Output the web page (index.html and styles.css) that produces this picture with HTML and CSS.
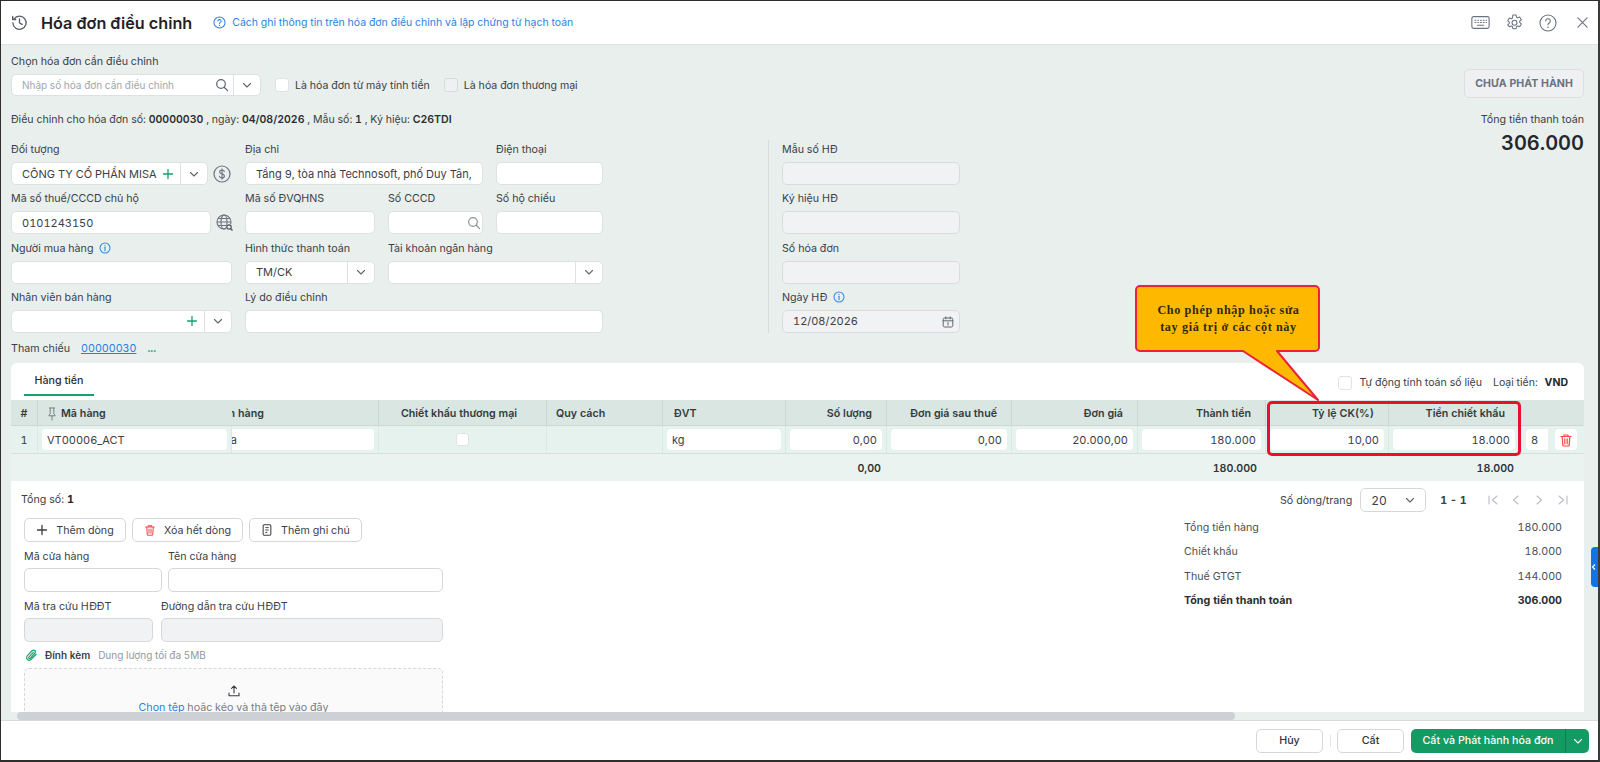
FILE: index.html
```html
<!DOCTYPE html>
<html lang="vi">
<head>
<meta charset="utf-8">
<title>Hóa đơn điều chỉnh</title>
<link rel="stylesheet" href="styles.css">
</head>
<body>
<svg class="sprite" width="0" height="0">
  <symbol id="chev" viewBox="0 0 12 12"><path d="M2.5 4.5 6 8l3.5-3.5" fill="none" stroke="currentColor" stroke-width="1.1" stroke-linecap="round" stroke-linejoin="round"/></symbol>
  <symbol id="plus" viewBox="0 0 12 12"><path d="M6 1.5v9M1.5 6h9" fill="none" stroke="currentColor" stroke-width="1.3" stroke-linecap="round"/></symbol>
  <symbol id="info" viewBox="0 0 14 14"><circle cx="7" cy="7" r="5.8" fill="none" stroke="currentColor" stroke-width="1.2"/><circle cx="7" cy="4.2" r=".8" fill="currentColor"/><path d="M7 6.2v4" stroke="currentColor" stroke-width="1.3" stroke-linecap="round"/></symbol>
  <symbol id="search" viewBox="0 0 14 14"><circle cx="6" cy="6" r="4.3" fill="none" stroke="currentColor" stroke-width="1.2"/><path d="m9.2 9.2 3.4 3.4" stroke="currentColor" stroke-width="1.3" stroke-linecap="round"/></symbol>
  <symbol id="trash" viewBox="0 0 14 14"><path d="M2 3.5h10M5 3.3V2h4v1.3M3.2 3.5l.6 8.6c0 .5.4.9.9.9h4.6c.5 0 .9-.4.9-.9l.6-8.6M5.8 5.8v5M8.2 5.8v5" fill="none" stroke="currentColor" stroke-width="1.2" stroke-linecap="round" stroke-linejoin="round"/></symbol>
</svg>

<div class="frame">
  <header class="head">
    <svg class="head-ico" viewBox="0 0 18 18"><path d="M3.3 5.2A7 7 0 1 1 2 9.5" fill="none" stroke="#555b63" stroke-width="1.4" stroke-linecap="round"/><path d="M1.8 2.6v3.200H5M9 5.200V9.500l2.800 1.500" fill="none" stroke="#555b63" stroke-width="1.4" stroke-linecap="round" stroke-linejoin="round"/></svg>
    <h1 class="title">Hóa đơn điều chỉnh</h1>
    <a class="help">
      <svg class="help-ico" viewBox="0 0 14 14"><circle cx="7" cy="7" r="6" fill="none" stroke="currentColor" stroke-width="1.1"/><path d="M5.3 5.5a1.7 1.7 0 1 1 2.6 1.4c-.6.4-.9.7-.9 1.3" fill="none" stroke="currentColor" stroke-width="1.1" stroke-linecap="round"/><circle cx="7" cy="10.2" r=".7" fill="currentColor"/></svg>
      <span>Cách ghi thông tin trên hóa đơn điều chỉnh và lập chứng từ hạch toán</span>
    </a>
    <div class="head-tools">
      <svg class="tool tool-kb" viewBox="0 0 20 14"><rect x=".7" y=".7" width="18.6" height="12.6" rx="2" fill="none" stroke="#6b7280" stroke-width="1.2"/><path d="M4 4.5h1M7 4.5h1M10 4.5h1M13 4.5h1M16 4.5h.5M4 7h1M7 7h1M10 7h1M13 7h1M16 7h.5M6.5 10h7" stroke="#6b7280" stroke-width="1.1" stroke-linecap="round"/></svg>
      <svg class="tool tool-gear" viewBox="0 0 18 18"><path d="M7.3 1h3.400l.5 2.300 1.100.7 2.200-.8 1.700 2.900-1.700 1.500v1.300l1.700 1.600-1.700 2.900-2.200-.8-1.100.7-.5 2.300H7.300l-.5-2.300-1.100-.7-2.200.8L1.800 11.500l1.700-1.600V8.600L1.800 7.100l1.700-2.900 2.200.8 1.100-.7z" fill="none" stroke="#6b7280" stroke-width="1.1" stroke-linejoin="round"/><circle cx="9" cy="9.2" r="2.6" fill="none" stroke="#6b7280" stroke-width="1.1"/></svg>
      <svg class="tool tool-help" viewBox="0 0 18 18"><circle cx="9" cy="9" r="8" fill="none" stroke="#6b7280" stroke-width="1.1"/><path d="M6.700 7a2.300 2.300 0 1 1 3.500 2c-.8.500-1.200.9-1.200 1.800" fill="none" stroke="#6b7280" stroke-width="1.1" stroke-linecap="round"/><circle cx="9" cy="13.2" r=".8" fill="#6b7280"/></svg>
      <svg class="tool tool-close" viewBox="0 0 12 12"><path d="m1 1 10 10M11 1 1 11" stroke="#6b7280" stroke-width="1.2" stroke-linecap="round"/></svg>
    </div>
  </header>

  <main class="body">
    <div class="upper">
      <div class="upper-left">
        <div class="lbl">Chọn hóa đơn cần điều chỉnh</div>
        <div class="search-row">
          <div class="box search-box">
            <span class="ph">Nhập số hóa đơn cần điều chỉnh</span>
            <svg class="ico-search"><use href="#search"/></svg>
            <span class="box-drop"><svg class="chev"><use href="#chev"/></svg></span>
          </div>
          <label class="check check-a"><i class="cb"></i>Là hóa đơn từ máy tính tiền</label>
          <label class="check"><i class="cb cb-off"></i>Là hóa đơn thương mại</label>
        </div>
        <p class="note">Điều chỉnh cho hóa đơn số: <b>00000030</b> , ngày: <b>04/08/2026</b> , Mẫu số: <b>1</b> , Ký hiệu: <b>C26TDI</b></p>

        <div class="form">
          <div class="fields">
            <div class="field">
              <div class="lbl">Đối tượng</div>
              <div class="with-ico">
                <div class="box box-obj">
                  <span class="val">CÔNG TY CỔ PHẦN MISA</span>
                  <svg class="plus"><use href="#plus"/></svg>
                  <span class="box-drop"><svg class="chev"><use href="#chev"/></svg></span>
                </div>
                <svg class="side-ico" viewBox="0 0 18 18"><circle cx="9" cy="9" r="8" fill="none" stroke="#6b7280" stroke-width="1.2"/><path d="M11.3 6.5C11 5.5 10 5 9 5c-1.3 0-2.3.7-2.3 1.9 0 2.5 4.7 1.4 4.7 4 0 1.3-1.1 2-2.4 2-1.2 0-2.2-.6-2.5-1.6M9 3.7v10.6" fill="none" stroke="#6b7280" stroke-width="1.1" stroke-linecap="round"/></svg>
              </div>
            </div>
            <div class="field span2">
              <div class="lbl">Địa chỉ</div>
              <div class="box"><span class="val">Tầng 9, tòa nhà Technosoft, phố Duy Tân,</span></div>
            </div>
            <div class="field">
              <div class="lbl">Điện thoại</div>
              <div class="box"></div>
            </div>

            <div class="field">
              <div class="lbl">Mã số thuế/CCCD chủ hộ</div>
              <div class="with-ico">
                <div class="box box-mst"><span class="val">0101243150</span></div>
                <svg class="side-ico" viewBox="0 0 18 18"><circle cx="8" cy="8" r="7" fill="none" stroke="#6b7280" stroke-width="1.1"/><ellipse cx="8" cy="8" rx="3" ry="7" fill="none" stroke="#6b7280" stroke-width="1.1"/><path d="M1 8h14M2 4.5h12M2 11.500h12" stroke="#6b7280" stroke-width="1.1"/><circle cx="13.5" cy="13.5" r="3.5" fill="#e9efed"/><circle cx="13" cy="13" r="2.2" fill="none" stroke="#4b5563" stroke-width="1.2"/><path d="m14.600 14.600 1.900 1.900" stroke="#4b5563" stroke-width="1.3"/></svg>
              </div>
            </div>
            <div class="field">
              <div class="lbl">Mã số ĐVQHNS</div>
              <div class="box"></div>
            </div>
            <div class="field">
              <div class="lbl">Số CCCD</div>
              <div class="box box-end"><svg class="ico-search ico-light"><use href="#search"/></svg></div>
            </div>
            <div class="field">
              <div class="lbl">Số hộ chiếu</div>
              <div class="box"></div>
            </div>

            <div class="field">
              <div class="lbl">Người mua hàng <svg class="info"><use href="#info"/></svg></div>
              <div class="box"></div>
            </div>
            <div class="field">
              <div class="lbl">Hình thức thanh toán</div>
              <div class="box"><span class="val">TM/CK</span><span class="box-drop"><svg class="chev"><use href="#chev"/></svg></span></div>
            </div>
            <div class="field span2">
              <div class="lbl">Tài khoản ngân hàng</div>
              <div class="box box-end"><span class="box-drop"><svg class="chev"><use href="#chev"/></svg></span></div>
            </div>

            <div class="field">
              <div class="lbl">Nhân viên bán hàng</div>
              <div class="box box-end box-plus"><svg class="plus"><use href="#plus"/></svg><span class="box-drop"><svg class="chev"><use href="#chev"/></svg></span></div>
            </div>
            <div class="field span3">
              <div class="lbl">Lý do điều chỉnh</div>
              <div class="box"></div>
            </div>
          </div>

          <div class="side">
            <div class="field"><div class="lbl">Mẫu số HĐ</div><div class="box box-off"></div></div>
            <div class="field"><div class="lbl">Ký hiệu HĐ</div><div class="box box-off"></div></div>
            <div class="field"><div class="lbl">Số hóa đơn</div><div class="box box-off"></div></div>
            <div class="field">
              <div class="lbl">Ngày HĐ <svg class="info"><use href="#info"/></svg></div>
              <div class="box box-off">
                <span class="val">12/08/2026</span>
                <svg class="cal" viewBox="0 0 12 12"><rect x="1.2" y="2" width="9.6" height="9" rx="1.5" fill="none" stroke="#5f6670" stroke-width="1"/><path d="M1.2 4.8h9.6M3.8 .9v2M8.2 .9v2M6 6.5v2.5" stroke="#5f6670" stroke-width="1" stroke-linecap="round"/></svg>
              </div>
            </div>
          </div>
        </div>

        <div class="ref">
          <span>Tham chiếu</span>
          <a class="ref-link">00000030</a>
          <span class="ref-more">...</span>
        </div>
      </div>

      <div class="upper-right">
        <div class="status">CHƯA PHÁT HÀNH</div>
        <div class="pay-lbl">Tổng tiền thanh toán</div>
        <div class="pay-val">306.000</div>
      </div>
    </div>

    <section class="card">
      <div class="tabbar">
        <div class="tab">Hàng tiền</div>
        <div class="tab-right">
          <label class="check"><i class="cb"></i>Tự động tính toán số liệu</label>
          <span class="cur">Loại tiền: <b>VND</b></span>
        </div>
      </div>

      <div class="grid grid-head">
        <div class="c c-center">#</div>
        <div class="c c-code"><svg class="pin" viewBox="0 0 10 14"><path d="M2.5 1h5M3.2 1v5.5L1.8 8.800h6.400L6.800 6.500V1M5 8.800V13" fill="none" stroke="#7a8086" stroke-width="1" stroke-linejoin="round" stroke-linecap="round"/></svg>Mã hàng</div>
        <div class="c c-clip"><span class="clip-head">Tên hàng</span></div>
        <div class="c c-center c-disc">Chiết khấu thương mại</div>
        <div class="c c-spec">Quy cách</div>
        <div class="c c-unit">ĐVT</div>
        <div class="c c-r">Số lượng</div>
        <div class="c c-r">Đơn giá sau thuế</div>
        <div class="c c-r">Đơn giá</div>
        <div class="c c-r">Thành tiền</div>
        <div class="c c-r">Tỷ lệ CK(%)</div>
        <div class="c c-r">Tiền chiết khấu</div>
        <div class="c c-last"></div>
      </div>

      <div class="grid grid-data">
        <div class="d d-center">1</div>
        <div class="d"><div class="cell-in">VT00006_ACT</div></div>
        <div class="d d-clip"><div class="cell-in cell-clip"><span class="clip-val">Hàng hóa</span></div></div>
        <div class="d d-center"><i class="cb cb-sm"></i></div>
        <div class="d"></div>
        <div class="d"><div class="cell-in">kg</div></div>
        <div class="d"><div class="cell-in in-r">0,00</div></div>
        <div class="d"><div class="cell-in in-r">0,00</div></div>
        <div class="d"><div class="cell-in in-r">20.000,00</div></div>
        <div class="d"><div class="cell-in in-r">180.000</div></div>
        <div class="d"><div class="cell-in in-r">10,00</div></div>
        <div class="d"><div class="cell-in in-r">18.000</div></div>
        <div class="d d-last">
          <div class="cell-in in-vat">8</div>
          <div class="del"><svg class="del-ico"><use href="#trash"/></svg></div>
        </div>
      </div>

      <div class="grid grid-sum">
        <div></div><div></div><div></div><div></div><div></div><div></div>
        <div class="s">0,00</div>
        <div></div><div></div>
        <div class="s s-wide">180.000</div>
        <div></div>
        <div class="s">18.000</div>
        <div></div>
      </div>

      <div class="bottom">
        <div class="bottom-left">
          <div class="count">Tổng số: <b>1</b></div>
          <div class="actions">
            <button class="btn btn-add"><svg class="btn-ico"><use href="#plus"/></svg>Thêm dòng</button>
            <button class="btn btn-del"><svg class="btn-ico btn-red"><use href="#trash"/></svg>Xóa hết dòng</button>
            <button class="btn btn-note"><svg class="btn-ico" viewBox="0 0 14 14"><rect x="2.5" y="1" width="9" height="12" rx="1.2" fill="none" stroke="#3a3f45" stroke-width="1.2"/><path d="M5 4.2h4M5 7h4M5 9.8h2.5" stroke="#3a3f45" stroke-width="1.1"/></svg>Thêm ghi chú</button>
          </div>
          <div class="store store-a">
            <div class="sf sf-a"><div class="lbl">Mã cửa hàng</div><div class="box box-line"></div></div>
            <div class="sf sf-b"><div class="lbl">Tên cửa hàng</div><div class="box box-line"></div></div>
          </div>
          <div class="store store-b">
            <div class="sf sf-c"><div class="lbl">Mã tra cứu HĐĐT</div><div class="box box-line box-off"></div></div>
            <div class="sf sf-d"><div class="lbl">Đường dẫn tra cứu HĐĐT</div><div class="box box-line box-off"></div></div>
          </div>
          <div class="attach">
            <svg class="clipico" viewBox="0 0 14 14"><path d="M12 6.2 7 11.5c-1.3 1.3-3.2 1.4-4.4.3s-1.1-3 .2-4.4l4.800-5c.9-.9 2.200-1 3-.2s.7 2.100-.1 3L5.900 10.500c-.5.5-1.200.5-1.600.1s-.4-1.100.1-1.600l4.500-4.700" fill="none" stroke="#20a26d" stroke-width="1.3" stroke-linecap="round"/></svg>
            <b>Đính kèm</b><span>Dung lượng tối đa 5MB</span>
          </div>
          <div class="drop">
            <svg class="upico" viewBox="0 0 12 12"><path d="M6 8V1M3.5 3.3 6 1l2.5 2.3M1 8v2.7h10V8" fill="none" stroke="#3a3f45" stroke-width="1.1" stroke-linecap="round" stroke-linejoin="round"/></svg>
            <div class="drop-text"><a>Chọn tệp</a> hoặc kéo và thả tệp vào đây</div>
          </div>
        </div>

        <div class="bottom-right">
          <div class="pager">
            <span>Số dòng/trang</span>
            <div class="pg-size"><span>20</span><svg class="pg-chev"><use href="#chev"/></svg></div>
            <b class="pg-range">1 - 1</b>
            <svg class="pg-nav" viewBox="0 0 100 12"><path d="M2 2v8M10 2 5.5 6l4.500 4M31 2l-4.500 4 4.500 4M50 2l4.500 4-4.500 4M72 2l4.500 4-4.500 4M80 2v8" fill="none" stroke="#b8bec5" stroke-width="1.1" stroke-linecap="round" stroke-linejoin="round"/></svg>
          </div>
          <div class="sum-row"><span>Tổng tiền hàng</span><span>180.000</span></div>
          <div class="sum-row"><span>Chiết khấu</span><span>18.000</span></div>
          <div class="sum-row"><span>Thuế GTGT</span><span>144.000</span></div>
          <div class="sum-row sum-total"><span>Tổng tiền thanh toán</span><span>306.000</span></div>
        </div>
      </div>
    </section>

    <div class="hscroll"><div class="hthumb"></div></div>
  </main>

  <footer class="foot">
    <button class="fbtn">Hủy</button>
    <i class="fsep"></i>
    <button class="fbtn">Cất</button>
    <div class="fmain"><span>Cất và Phát hành hóa đơn</span><span class="fdrop"><svg class="chev chev-w"><use href="#chev"/></svg></span></div>
  </footer>

  <div class="edge-tab"><svg class="edge-chev" viewBox="0 0 6 8"><path d="M4 1.5 1.5 4 4 6.5" fill="none" stroke="#fff" stroke-width="1.2"/></svg></div>
  <div class="hl"></div>
  <div class="callout">
    <svg class="callout-bg" viewBox="1130 280 200 125"><path d="M1140 286h175a4 4 0 0 1 4 4v57a4 4 0 0 1-4 4h-38l41 49-75-49h-103a4 4 0 0 1-4-4v-57a4 4 0 0 1 4-4z" fill="#ffb800" stroke="#ec2238" stroke-width="2" stroke-linejoin="round"/></svg>
    <div class="callout-text">Cho phép nhập hoặc sửa<br>tay giá trị ở các cột này</div>
  </div>
</div>
</body>
</html>
```

FILE: styles.css
```css
* { box-sizing: border-box; }
html, body { margin: 0; padding: 0; }
body { width: 1600px; height: 762px; overflow: hidden; background: #fff; font-family: Inter, "Noto Sans", sans-serif; font-size: 10.7px; font-feature-settings: "tnum"; color: #3a4047; }
.sprite { position: absolute; }
.frame { position: relative; width: 1600px; height: 762px; display: flex; flex-direction: column; border-top: 1px solid #2e2e2c; border-left: 1px solid #2e2e2c; border-bottom: 2px solid #2e2e2c; border-right: 2px solid #3a3a3a; overflow: hidden; }

.head { height: 44px; flex: none; display: flex; align-items: center; padding: 0 10px; background: #fff; border-bottom: 1px solid #dfe3e2; }
.head-ico { width: 17px; height: 17px; margin-right: 13px; }
.title { margin: 0; font-size: 16.2px; font-weight: 600; color: #1f2329; font-feature-settings: normal; }
.help { display: flex; align-items: center; margin-left: 21px; color: #2b7fe0; font-size: 10.5px; }
.help-ico { width: 13px; height: 13px; margin-right: 6px; }
.head-tools { margin-left: auto; display: flex; align-items: center; }
.tool-kb { width: 19px; height: 13px; }
.tool-gear { width: 17px; height: 17px; margin-left: 16px; }
.tool-help { width: 18px; height: 18px; margin-left: 16px; }
.tool-close { width: 11px; height: 11px; margin-left: 20px; }

.body { flex: 1; min-height: 0; background: #e9efed; display: flex; flex-direction: column; }
.upper { display: flex; flex: none; height: 318px; padding: 7px 14px 0 10px; }
.upper-left { width: 950px; flex: none; }
.upper-right { flex: 1; display: flex; flex-direction: column; align-items: flex-end; padding-top: 17px; }

.lbl { height: 18px; line-height: 20px; display: flex; align-items: flex-start; gap: 6px; color: #3a4047; white-space: nowrap; }
.box { position: relative; height: 23px; background: #fff; border: 1px solid #dde1e3; border-radius: 5px; display: flex; align-items: center; padding: 0 10px; }
.box-off { background: #f0f2f4; border-color: #d9dcdf; }
.box-line { height: 24px; border-color: #d4d8db; }
.box-end { justify-content: flex-end; padding-right: 0; }
.box-plus { padding-right: 33px; }
.box-obj { flex: 0 0 197px; padding-right: 33px; justify-content: space-between; }
.box-mst { flex: 0 0 200px; }
.val { color: #3a4047; white-space: nowrap; font-size: 11px; }
.ph { color: #a0a6ad; font-size: 10px; white-space: nowrap; }
.box-drop { position: absolute; right: 0; top: 0; bottom: 0; width: 27px; display: flex; align-items: center; justify-content: center; border-left: 1px solid #dde1e3; }
.chev { width: 12px; height: 12px; color: #5f6670; }
.chev-w { color: #fff; }
.plus { width: 12px; height: 12px; color: #17a168; flex: none; }
.ico-search { width: 14px; height: 14px; color: #5f6670; }
.ico-light { color: #8b929a; margin-right: 1px; }
.info { width: 12px; height: 12px; color: #2f8be6; align-self: center; margin-top: 1px; }

.search-row { display: flex; align-items: center; margin-top: 4px; height: 22px; }
.search-box { width: 250px; height: 22px; padding-right: 34px; }
.search-box .ico-search { position: absolute; right: 31px; top: 3px; }
.check { display: flex; align-items: center; color: #3a4047; white-space: nowrap; font-size: 10.6px; }
.check-a { margin: 0 14px; }
.cb { display: inline-block; width: 14px; height: 14px; background: #fff; border: 1px solid #dfe3e5; border-radius: 3px; margin-right: 6px; }
.cb-off { background: #eef0f2; border-color: #d6dadd; }
.cb-sm { width: 13px; height: 13px; margin: 0; }

.note { margin: 14px 0 0; height: 18px; line-height: 20px; white-space: nowrap; font-size: 10.55px; }
.note b { color: #2a2e33; font-weight: 600; }

.form { display: flex; margin-top: 12px; }
.fields { width: 592px; flex: none; display: grid; grid-template-columns: 221px 130px 95px 107px; column-gap: 13px; grid-auto-rows: 49.33px; }
.field { min-width: 0; }
.field .lbl { margin-bottom: 4px; }
.span2 { grid-column: span 2; }
.span3 { grid-column: span 3; }
.with-ico { display: flex; align-items: center; }
.side-ico { width: 18px; height: 18px; margin-left: 5px; flex: none; }

.side { margin-left: 165px; width: 192px; border-left: 1px solid #d7dcda; padding-left: 13px; height: 193px; display: grid; grid-auto-rows: 49.33px; }
.cal { position: absolute; right: 5px; top: 5px; width: 12px; height: 12px; }

.ref { display: flex; align-items: center; height: 18px; margin-top: 2px; }
.ref-link { margin-left: 11px; color: #2b7fe0; text-decoration: underline; }
.ref-more { margin-left: 11px; color: #17a168; font-weight: 700; }

.status { width: 120px; height: 29px; display: flex; align-items: center; justify-content: center; background: #eef0f2; border: 1px solid #dcdfe2; border-radius: 5px; color: #6b7280; font-weight: 700; font-size: 10.6px; }
.pay-lbl { margin-top: 12px; line-height: 20px; color: #3a4047; }
.pay-val { line-height: 26px; font-size: 20px; font-weight: 600; color: #23272c; }

.card { flex: none; height: 349px; margin: 0 14px 0 10px; background: #fff; border-radius: 6px 6px 0 0; overflow: hidden; }
.tabbar { height: 37px; display: flex; justify-content: space-between; padding: 0 16px 0 13px; }
.tab { width: 70px; height: 33px; line-height: 35px; text-align: center; color: #2a2e33; font-weight: 500; border-bottom: 2px solid #17a168; }
.tab-right { display: flex; align-items: center; gap: 11px; height: 100%; padding-top: 2px; }
.tab-right .cb { margin-right: 7px; }
.cur { color: #3a4047; font-size: 10.5px; }
.cur b { margin-left: 4px; color: #23272c; font-weight: 700; }

.grid { display: grid; grid-template-columns: 27px 194px 147px 168px 116px 123px 101px 125px 126px 128px 123px 131px 63px; }
.grid-head { height: 26px; background: #d9e6e1; }
.c { display: flex; align-items: center; padding: 2px 12px 0; font-weight: 600; color: #343a40; white-space: nowrap; overflow: hidden; border-right: 1px solid #cbd9d4; border-bottom: 1px solid #cdd8d4; }
.c-center { justify-content: center; padding: 2px 0 0; }
.c-disc { padding-right: 7px; }
.c-spec { padding-left: 9px; }
.c-unit { padding-left: 11px; }
.c-r { justify-content: flex-end; padding-right: 14px; }
.c-last { border-right: 0; }
.c-code { padding-left: 9px; border-right: 0; }
.pin { width: 10px; height: 14px; margin-right: 4px; }
.c-clip { padding: 2px 0 0; }
.clip-head { margin-left: -16px; }

.grid-data { height: 28px; background: #e5f2ed; border-bottom: 1px solid #d5dfdb; font-size: 11px; }
.d { display: flex; align-items: center; padding: 0 4px; border-right: 1px dotted #cfdfd9; min-width: 0; color: #3a4047; }
.d-center { justify-content: center; padding: 0; }
.d-clip { padding: 0 4px 0 0; overflow: hidden; }
.d-last { border-right: 0; padding: 0 6px; gap: 7px; }
.cell-in { width: 100%; height: 21px; line-height: 22px; background: #fff; border-radius: 4px; padding: 0 5px; white-space: nowrap; overflow: hidden; }
.cell-clip { padding: 0; border-radius: 0 4px 4px 0; }
.clip-val { display: block; margin-left: -45px; }
.in-r { text-align: right; }
.in-vat { width: 22px; flex: none; border-radius: 4px 0 0 4px; }
.del { width: 22px; height: 21px; flex: none; background: #fff; border-radius: 4px; display: flex; align-items: center; justify-content: center; }
.del-ico { width: 14px; height: 14px; color: #ef4a4a; }

.grid-sum { height: 27px; background: #ebf3f0; }
.s { text-align: right; line-height: 29px; font-weight: 600; color: #2f343a; padding-right: 6px; }
.s-wide { padding-right: 9px; }

.bottom { display: flex; justify-content: space-between; padding: 0 22px 0 10px; }
.bottom-left { width: 432px; }
.count { height: 18px; line-height: 18px; margin-top: 10px; }
.count b { color: #23272c; }
.actions { display: flex; gap: 6px; margin: 9px 0 0 3px; }
.btn { height: 24px; padding: 0; display: flex; align-items: center; justify-content: center; gap: 8px; background: #fff; border: 1px solid #d4d8db; border-radius: 5px; font: inherit; color: #3a4047; }
.btn-add { width: 102px; }
.btn-del { width: 111px; }
.btn-note { width: 113px; }
.btn-ico { width: 12px; height: 12px; color: #3a3f45; }
.btn-red { color: #ef4a4a; }
.store { display: flex; margin-left: 3px; }
.store-a { margin-top: 5px; gap: 6px; }
.store-b { margin-top: 5px; gap: 8px; }
.sf .lbl { margin-bottom: 3px; }
.sf-a { width: 138px; }
.sf-b { width: 275px; }
.sf-c { width: 129px; }
.sf-d { width: 282px; }
.attach { display: flex; align-items: center; height: 18px; margin: 4px 0 0 4px; font-size: 10px; color: #9098a0; }
.attach b { margin: 0 8px 0 7px; color: #3a4047; font-weight: 600; }
.clipico { width: 13px; height: 14px; }
.drop { margin: 4px 0 0 3px; width: 419px; height: 60px; display: flex; flex-direction: column; align-items: center; padding-top: 16px; background: #fafafa; border: 1px dashed #d4d8db; border-radius: 5px; }
.upico { width: 12px; height: 12px; flex: none; }
.drop-text { margin-top: 2px; line-height: 18px; color: #767d85; }
.drop-text a { color: #2b7fe0; }

.bottom-right { width: 378px; }
.pager { display: flex; align-items: center; height: 24px; margin-top: 7px; padding-left: 96px; white-space: nowrap; }
.pg-size { margin-left: 8px; width: 66px; height: 24px; flex: none; display: flex; align-items: center; justify-content: space-between; padding: 0 9px 0 10px; border: 1px solid #d4d8db; border-radius: 5px; font-size: 12px; }
.pg-chev { width: 12px; height: 12px; color: #5f6670; }
.pg-range { margin-left: 14px; color: #3a4047; }
.pg-nav { width: 100px; height: 12px; margin-left: 20px; flex: none; }
.sum-row { display: flex; justify-content: space-between; height: 24.3px; line-height: 24px; color: #4a5057; }
.sum-row:nth-child(2) { margin-top: 4px; }
.sum-total { font-weight: 700; color: #2a2e33; }

.hscroll { flex: none; height: 8px; padding: 0 363px 0 16px; }
.hthumb { height: 8px; background: #cdd1d6; border-radius: 4px; }

.foot { flex: none; height: 40px; background: #fff; border-top: 1px solid #d9dcdc; display: flex; align-items: center; padding: 0 9px 0 0; justify-content: flex-end; }
.fbtn { width: 67px; height: 24px; padding: 0; background: #fff; border: 1px solid #d4d8db; border-radius: 5px; font: inherit; font-weight: 500; color: #2f343a; }
.fsep { width: 1px; height: 12px; margin: 0 6px 0 7px; background: #e2e5e6; }
.fmain { margin-left: 7px; width: 178px; height: 24px; display: flex; align-items: center; background: #149a63; border-radius: 5px; color: #fff; font-weight: 500; }
.fmain span:first-child { flex: 1; text-align: center; }
.fdrop { width: 24px; height: 24px; display: flex; align-items: center; justify-content: center; border-left: 1px solid #0f7d50; }

.edge-tab { position: absolute; right: -1px; top: 546px; width: 8px; height: 40px; display: flex; align-items: center; background: #0f74e5; border-radius: 4px 0 0 4px; }
.edge-chev { width: 6px; height: 8px; }
.hl { position: absolute; left: 1266px; top: 400px; width: 254px; height: 55px; border: 3px solid #e8112d; border-radius: 5px; }
.callout { position: absolute; left: 1129px; top: 279px; width: 200px; height: 125px; }
.callout-bg { display: block; width: 200px; height: 125px; }
.callout-text { position: absolute; left: 7px; top: 6px; width: 183px; height: 65px; display: flex; align-items: center; justify-content: center; text-align: center; font-family: "Liberation Serif", serif; font-weight: 700; font-size: 12.2px; line-height: 16.5px; letter-spacing: .62px; color: #2b2b10; }
```
